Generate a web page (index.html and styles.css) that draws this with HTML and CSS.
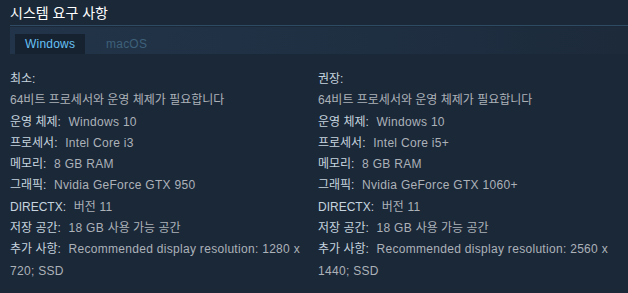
FILE: index.html
```html
<!DOCTYPE html>
<html lang="ko">
<head>
<meta charset="utf-8">
<link rel="stylesheet" href="styles.css">
</head>
<body>
<div class="sysreq">
  <h2 class="title">시스템 요구 사항</h2>
  <div class="tabs">
    <div class="tab active">Windows</div>
    <div class="tab">macOS</div>
  </div>
  <div class="cols">
    <ul class="col">
      <li class="head">최소:</li>
      <li class="kr">64비트 프로세서와 운영 체제가 필요합니다</li>
      <li><span class="lbl">운영 체제:</span> Windows 10</li>
      <li><span class="lbl">프로세서:</span> Intel Core i3</li>
      <li><span class="lbl">메모리:</span> 8 GB RAM</li>
      <li><span class="lbl">그래픽:</span> Nvidia GeForce GTX 950</li>
      <li><span class="lbl">DIRECTX:</span> <span class="kr">버전</span> 11</li>
      <li><span class="lbl">저장 공간:</span> 18 GB <span class="kr">사용 가능 공간</span></li>
      <li><span class="lbl">추가 사항:</span> Recommended display resolution: 1280 x 720; SSD</li>
    </ul>
    <ul class="col">
      <li class="head">권장:</li>
      <li class="kr">64비트 프로세서와 운영 체제가 필요합니다</li>
      <li><span class="lbl">운영 체제:</span> Windows 10</li>
      <li><span class="lbl">프로세서:</span> Intel Core i5+</li>
      <li><span class="lbl">메모리:</span> 8 GB RAM</li>
      <li><span class="lbl">그래픽:</span> Nvidia GeForce GTX 1060+</li>
      <li><span class="lbl">DIRECTX:</span> <span class="kr">버전</span> 11</li>
      <li><span class="lbl">저장 공간:</span> 18 GB <span class="kr">사용 가능 공간</span></li>
      <li><span class="lbl">추가 사항:</span> Recommended display resolution: 2560 x 1440; SSD</li>
    </ul>
  </div>
</div>
</body>
</html>
```
FILE: styles.css
```css
html, body {
  margin: 0;
  padding: 0;
  background: #1b2838;
}
body {
  font-family: "Liberation Sans", Arial, "Noto Sans CJK KR", sans-serif;
  font-size: 12px;
  color: #acb2b8;
}
.sysreq {
  padding: 0 0 0 10px;
}
.title {
  margin: 0;
  padding-top: 3px;
  height: 22px;
  font-size: 14px;
  font-weight: normal;
  line-height: 20px;
  color: #ffffff;
  border-bottom: 1px solid #2f4a63;
}
.tabs {
  display: flex;
  height: 27px;
  padding: 7px 0 0 5px;
  box-sizing: border-box;
  margin-top: 1px;
  background: linear-gradient(to right, #223449 0%, #1f2f42 60%, #1c2a3a 100%);
}
.tab {
  padding: 0 10px;
  height: 20px;
  line-height: 20px;
  font-size: 12px;
  letter-spacing: 0.2px;
  color: #3e6079;
  margin-right: 11px;
}
.tab.active {
  background: #162230;
  color: #67c1f5;
}
.cols {
  display: flex;
  gap: 8px;
  padding-top: 15px;
}
.col {
  list-style: none;
  margin: 0;
  padding: 0;
  width: 300px;
}
.col li {
  line-height: 21.3px;
  letter-spacing: 0.3px;
}
.lbl, .head {
  color: #c6d4df;
}
.col .lbl, .col .head, .col .kr {
  letter-spacing: 0;
}
.lbl {
  margin-right: 4px;
}
```
